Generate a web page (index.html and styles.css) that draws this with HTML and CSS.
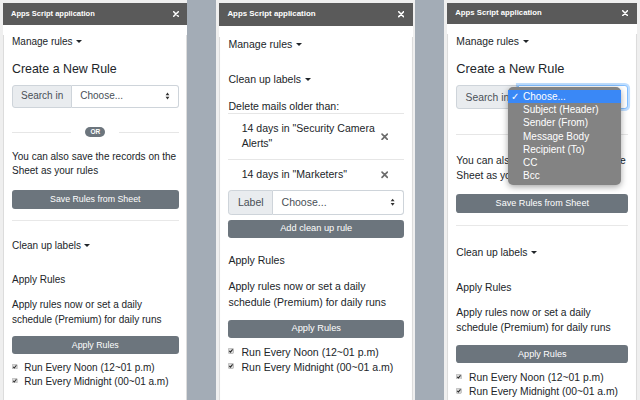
FILE: index.html
```html
<!DOCTYPE html>
<html lang="en">
<head>
<meta charset="utf-8">
<title>Apps Script application</title>
<link rel="stylesheet" href="styles.css">
</head>
<body>

<div class="shot shot-1">
  <div class="dialog">
    <div class="titlebar">
      <span class="title">Apps Script application</span>
      <svg class="close" viewBox="0 0 6 6"><path d="M0.7 0.7L5.3 5.3M5.3 0.7L0.7 5.3" stroke="#fff" stroke-width="1.5" stroke-linecap="round"/></svg>
    </div>
    <div class="content">
      <div class="toggle toggle--first">Manage rules<span class="caret"></span></div>
      <h2 class="heading">Create a New Rule</h2>
      <div class="input-group">
        <span class="addon">Search in</span>
        <div class="select"><span>Choose...</span><svg class="arrows" viewBox="0 0 5 8"><path d="M0.6 3.2L2.5 0.6L4.4 3.2Z M0.6 4.8L2.5 7.4L4.4 4.8Z" fill="#333"/></svg></div>
      </div>
      <div class="or-divider"><span class="or-line"></span><span class="badge">OR</span><span class="or-line"></span></div>
      <p class="text">You can also save the records on the Sheet as your rules</p>
      <div class="btn">Save Rules from Sheet</div>
      <hr class="rule">
      <div class="toggle">Clean up labels<span class="caret"></span></div>
      <div class="label">Apply Rules</div>
      <p class="text text--tight">Apply rules now or set a daily schedule (Premium) for daily runs</p>
      <div class="btn btn--apply">Apply Rules</div>
      <div class="checks">
        <div class="check"><svg class="box" viewBox="0 0 6 6"><rect x="0.3" y="0.3" width="5.4" height="5.4" rx="1" fill="#dadada" stroke="#8f8f8f" stroke-width="0.5"/><path d="M1.3 3.1L2.5 4.3L4.8 1.4" fill="none" stroke="#2b2b2b" stroke-width="1.1"/></svg>Run Every Noon (12~01 p.m)</div>
        <div class="check"><svg class="box" viewBox="0 0 6 6"><rect x="0.3" y="0.3" width="5.4" height="5.4" rx="1" fill="#dadada" stroke="#8f8f8f" stroke-width="0.5"/><path d="M1.3 3.1L2.5 4.3L4.8 1.4" fill="none" stroke="#2b2b2b" stroke-width="1.1"/></svg>Run Every Midnight (00~01 a.m)</div>
      </div>
    </div>
  </div>
</div>

<div class="shot shot-2">
  <div class="dialog">
    <div class="titlebar">
      <span class="title">Apps Script application</span>
      <svg class="close" viewBox="0 0 6 6"><path d="M0.7 0.7L5.3 5.3M5.3 0.7L0.7 5.3" stroke="#fff" stroke-width="1.5" stroke-linecap="round"/></svg>
    </div>
    <div class="content">
      <div class="toggle toggle--first">Manage rules<span class="caret"></span></div>
      <div class="toggle">Clean up labels<span class="caret"></span></div>
      <div class="intro">Delete mails older than:</div>
      <div class="list">
        <div class="list-item"><span class="item-text">14 days in "Security Camera Alerts"</span><svg class="remove" viewBox="0 0 7 7"><path d="M1 1L6 6M6 1L1 6" stroke="#6c6c6c" stroke-width="1.6" stroke-linecap="round"/></svg></div>
        <div class="list-item"><span class="item-text">14 days in "Marketers"</span><svg class="remove" viewBox="0 0 7 7"><path d="M1 1L6 6M6 1L1 6" stroke="#6c6c6c" stroke-width="1.6" stroke-linecap="round"/></svg></div>
      </div>
      <div class="input-group input-group--flush">
        <span class="addon">Label</span>
        <div class="select"><span>Choose...</span><svg class="arrows" viewBox="0 0 5 8"><path d="M0.6 3.2L2.5 0.6L4.4 3.2Z M0.6 4.8L2.5 7.4L4.4 4.8Z" fill="#333"/></svg></div>
      </div>
      <div class="btn btn--near">Add clean up rule</div>
      <div class="label label--after-btn">Apply Rules</div>
      <p class="text text--tight">Apply rules now or set a daily schedule (Premium) for daily runs</p>
      <div class="btn btn--apply">Apply Rules</div>
      <div class="checks checks--loose">
        <div class="check"><svg class="box" viewBox="0 0 6 6"><rect x="0.3" y="0.3" width="5.4" height="5.4" rx="1" fill="#dadada" stroke="#8f8f8f" stroke-width="0.5"/><path d="M1.3 3.1L2.5 4.3L4.8 1.4" fill="none" stroke="#2b2b2b" stroke-width="1.1"/></svg>Run Every Noon (12~01 p.m)</div>
        <div class="check"><svg class="box" viewBox="0 0 6 6"><rect x="0.3" y="0.3" width="5.4" height="5.4" rx="1" fill="#dadada" stroke="#8f8f8f" stroke-width="0.5"/><path d="M1.3 3.1L2.5 4.3L4.8 1.4" fill="none" stroke="#2b2b2b" stroke-width="1.1"/></svg>Run Every Midnight (00~01 a.m)</div>
      </div>
    </div>
  </div>
</div>

<div class="shot shot-3">
  <div class="dialog dialog--short">
    <div class="titlebar">
      <span class="title">Apps Script application</span>
      <svg class="close" viewBox="0 0 6 6"><path d="M0.7 0.7L5.3 5.3M5.3 0.7L0.7 5.3" stroke="#fff" stroke-width="1.5" stroke-linecap="round"/></svg>
    </div>
    <div class="content">
      <div class="toggle toggle--first">Manage rules<span class="caret"></span></div>
      <h2 class="heading">Create a New Rule</h2>
      <div class="input-group">
        <span class="addon">Search in</span>
        <div class="select select--focus"><span>Choose...</span><svg class="arrows" viewBox="0 0 5 8"><path d="M0.6 3.2L2.5 0.6L4.4 3.2Z M0.6 4.8L2.5 7.4L4.4 4.8Z" fill="#333"/></svg></div>
      </div>
      <div class="or-divider"><span class="or-line"></span><span class="badge">OR</span><span class="or-line"></span></div>
      <p class="text">You can also save the records on the Sheet as your rules</p>
      <div class="btn">Save Rules from Sheet</div>
      <hr class="rule">
      <div class="toggle">Clean up labels<span class="caret"></span></div>
      <div class="label">Apply Rules</div>
      <p class="text text--tight">Apply rules now or set a daily schedule (Premium) for daily runs</p>
      <div class="btn btn--apply">Apply Rules</div>
      <div class="checks">
        <div class="check"><svg class="box" viewBox="0 0 6 6"><rect x="0.3" y="0.3" width="5.4" height="5.4" rx="1" fill="#dadada" stroke="#8f8f8f" stroke-width="0.5"/><path d="M1.3 3.1L2.5 4.3L4.8 1.4" fill="none" stroke="#2b2b2b" stroke-width="1.1"/></svg>Run Every Noon (12~01 p.m)</div>
        <div class="check"><svg class="box" viewBox="0 0 6 6"><rect x="0.3" y="0.3" width="5.4" height="5.4" rx="1" fill="#dadada" stroke="#8f8f8f" stroke-width="0.5"/><path d="M1.3 3.1L2.5 4.3L4.8 1.4" fill="none" stroke="#2b2b2b" stroke-width="1.1"/></svg>Run Every Midnight (00~01 a.m)</div>
      </div>
    </div>
  </div>
  <ul class="menu">
    <li class="menu-item menu-item--active"><span class="tick">✓</span>Choose...</li>
    <li class="menu-item">Subject (Header)</li>
    <li class="menu-item">Sender (From)</li>
    <li class="menu-item">Message Body</li>
    <li class="menu-item">Recipient (To)</li>
    <li class="menu-item">CC</li>
    <li class="menu-item">Bcc</li>
  </ul>
</div>

</body>
</html>
```

FILE: styles.css
```css
* { box-sizing: border-box; }

html, body { margin: 0; padding: 0; }

body {
  width: 640px;
  height: 400px;
  overflow: hidden;
  background: #a3acb6;
  display: flex;
  gap: 29px;
  font-family: "Liberation Sans", Arial, "DejaVu Sans", sans-serif;
  color: #212529;
}

.shot {
  flex: 0 0 auto;
  height: 400px;
  overflow: hidden;
  background: #efefef;
  padding: 3px 0 0 3px;
  position: relative;
}
.shot-1 { width: 187px; }
.shot-2 { width: 199px; }
.shot-3 { width: 196px; }

.dialog {
  width: 184px;
  background: #fff;
}
.shot-2 .dialog { zoom: 1.054; }
.shot-3 .dialog { zoom: 1.033; }

.titlebar {
  height: 22px;
  background: #5a5a5a;
  color: #fff;
  display: flex;
  align-items: center;
  justify-content: space-between;
  padding: 0 8.5px 0 8px;
}
.dialog--short .titlebar { height: 20px; }

.title {
  font-size: 7.5px;
  font-weight: bold;
  line-height: 10px;
}

.close { width: 6px; height: 6px; display: block; }

.content {
  padding: 0 8.5px 0 9px;
  min-height: 400px;
  box-shadow: inset 1px 0 0 #dcdcdc, inset -1px 0 0 #dcdcdc;
  font-size: 10px;
  line-height: 14.6px;
}

.toggle { margin-top: 18.6px; }
.toggle--first { margin-top: 10.4px; }

.caret {
  display: inline-block;
  margin-left: 3.5px;
  vertical-align: 2px;
  border-top: 3.5px solid #212529;
  border-left: 3px solid transparent;
  border-right: 3px solid transparent;
}

.heading {
  margin: 11px 0 0;
  font-size: 12.4px;
  line-height: 16px;
  font-weight: normal;
}

.input-group {
  display: flex;
  height: 23px;
  margin-top: 7.7px;
  color: #495057;
}
.input-group--flush { margin-top: 0.5px; }

.addon {
  display: flex;
  align-items: center;
  padding: 0 8px;
  background: #e9ecef;
  border: 1px solid #ced4da;
  border-radius: 3px 0 0 3px;
}

.select {
  flex: 1;
  display: flex;
  align-items: center;
  justify-content: space-between;
  padding: 0 7.5px 0 8px;
  background: #fff;
  border: 1px solid #ced4da;
  border-left: 0;
  border-radius: 0 3px 3px 0;
}
.select--focus {
  border: 1px solid #80bdff;
  box-shadow: 0 0 0 2px rgba(0, 123, 255, 0.25);
}

.arrows { width: 5px; height: 8px; display: block; }

.or-divider {
  display: flex;
  align-items: center;
  gap: 14px;
  height: 10px;
  margin-top: 19.7px;
}
.or-line { flex: 1; height: 1px; background: #e6e6e6; }
.badge {
  width: 20px;
  height: 10px;
  border-radius: 5px;
  background: #6c757d;
  color: #fff;
  font-size: 6.5px;
  font-weight: bold;
  line-height: 10px;
  text-align: center;
}

.text { margin: 12.4px 0 0; }
.text--tight { margin-top: 9.5px; line-height: 15px; }

.btn {
  margin-top: 11.4px;
  height: 18.3px;
  background: #6c757d;
  color: #fff;
  border-radius: 3px;
  font-size: 8.8px;
  display: flex;
  align-items: center;
  justify-content: center;
}
.btn--apply { margin-top: 8.9px; height: 17.6px; }
.btn--near { margin-top: 4.8px; height: 17.7px; }

.rule {
  margin: 11px 0 0;
  border: 0;
  border-top: 1px solid #e8e8e8;
  height: 0;
}

.label { margin-top: 19.4px; }
.label--after-btn { margin-top: 14.5px; }

.checks { margin-top: 7.4px; line-height: 14px; }
.checks--loose { margin-top: 6.2px; line-height: 14.5px; }

.check { display: flex; align-items: center; }
.box {
  width: 5.5px;
  height: 5.5px;
  margin: 0 6.8px 3px 0;
  flex: none;
}

.intro { margin-top: 10.7px; line-height: 13.5px; }

.list-item {
  display: flex;
  align-items: center;
  padding: 7px 15.2px 7px 12.5px;
  border-top: 1px solid #e6e6e6;
  line-height: 14.3px;
}
.item-text { flex: 1; }
.remove { width: 7px; height: 7px; flex: none; margin-left: 3px; display: block; }

.menu {
  position: absolute;
  left: 64px;
  top: 87px;
  width: 113px;
  margin: 0;
  padding: 2.7px 0;
  list-style: none;
  background: #838383;
  border-radius: 5px;
  box-shadow: 0 2px 6px rgba(0, 0, 0, 0.35);
  color: #fff;
  font-size: 10px;
}
.menu-item {
  position: relative;
  height: 13.3px;
  line-height: 13.3px;
  padding-left: 15px;
}
.menu-item--active { background: #3a88f6; }
.tick {
  position: absolute;
  left: 3px;
  top: 0;
  font-family: "DejaVu Sans", sans-serif;
  font-size: 10px;
}
```
